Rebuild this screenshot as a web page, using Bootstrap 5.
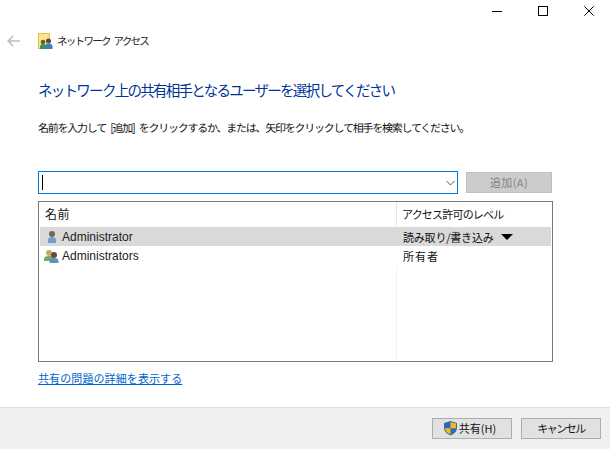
<!DOCTYPE html>
<html lang="ja">
<head>
<meta charset="utf-8">
<title>ネットワーク アクセス</title>
<link href="https://cdn.jsdelivr.net/npm/bootstrap@5.3.0/dist/css/bootstrap.min.css" rel="stylesheet">
<style>
html,body{height:100%;}
body{width:610px;height:449px;overflow:hidden;background:#fff;color:#111;font-family:"Noto Sans CJK JP","Liberation Sans",sans-serif;font-size:12px;line-height:16px;}
.win-root{height:449px;}
.title-strip{height:22px;}
.win-ctl{width:46px;height:22px;padding-left:4px;}
.nav-strip{height:38px;padding-left:7px;gap:17px;color:#333;}
.nav-title{margin-left:-14px;font-size:10.5px;letter-spacing:-1.7px;word-spacing:3px;color:#222;white-space:pre;}
.body-area{padding:0 57px 0 38px;}
.head-text{margin:20px 0 0;font-size:14.5px;line-height:20px;font-weight:400;color:#003399;letter-spacing:-1.72px;white-space:nowrap;}
.lead-text{margin:20px 0 0;font-size:11px;line-height:16px;letter-spacing:-1.25px;word-spacing:3px;text-rendering:geometricPrecision;white-space:nowrap;}
.pick-row{margin-top:35px;height:23px;gap:8px;}
.pick-box{width:420px;height:23px;border:1.5px solid #0078d7;padding:0 2px 0 3px;}
.caret-bar{width:1px;height:15px;background:#000;}
.add-off.btn:disabled{width:86px;height:21px;background:#ccc;border:1px solid #bfbfbf;color:#838383;opacity:1;font-size:11px;line-height:19px;letter-spacing:.4px;text-align:center;padding:0;border-radius:0;}
.user-table{margin-top:7px;height:161px;width:515px;border:1px solid #7a7a7a;padding:0 1px;}
.col-one{width:357px;flex:none;}
.col-two{width:154px;flex:none;}
.th-row{height:25px;}
.th-one{padding:4px 0 0 5px;border-right:1px solid #e5e5e5;font-size:12px;letter-spacing:.5px;}
.th-two{padding:4px 0 0 5px;letter-spacing:-.8px;}
.cell-txt{font-size:11px;letter-spacing:-.2px;white-space:nowrap;}
.user-row{height:19px;align-items:center;}
.user-sel{background:#d9d9d9;}
.user-row .col-one{padding-left:4px;gap:2px;font-family:"Liberation Sans",sans-serif;font-size:12px;letter-spacing:0;color:#222;}
.user-row .group-cell{padding-left:3px;gap:1px;}
.user-row .col-two{padding-left:6px;}
.owner-txt{letter-spacing:1px;}
.drop-tri{width:0;height:0;border-left:6px solid transparent;border-right:6px solid transparent;border-top:6px solid #000;margin-left:7px;}
.rest-rule{height:96px;}
.rest-one{border-right:1px solid #f2f2f2;}
.help-link{display:inline-block;margin-top:8px;font-size:11px;line-height:16px;color:#0066cc;letter-spacing:.1px;}
.foot-bar{height:42px;background:#f0f0f0;border-top:1px solid #dfdfdf;padding:10px 9px 0 0;gap:9px;margin-top:auto;}
.foot-btn{width:80px;height:21px;background:#e1e1e1;border:1px solid #adadad;border-radius:0;padding:0;font-size:11px;line-height:19px;color:#111;white-space:nowrap;}
.foot-btn svg{margin-right:1px;vertical-align:-3px;}
.share-btn{padding-right:5px;}
.cancel-txt{letter-spacing:-1.5px;}
</style>
</head>
<body>
<div class="win-root d-flex flex-column">
  <div class="title-strip d-flex justify-content-end">
    <div class="win-ctl d-flex align-items-center justify-content-center"><svg width="10" height="10" viewBox="0 0 10 10"><path d="M0 5.5h10" stroke="#000" fill="none"/></svg></div>
    <div class="win-ctl d-flex align-items-center justify-content-center"><svg width="10" height="10" viewBox="0 0 10 10"><rect x=".5" y=".5" width="9" height="9" stroke="#000" fill="none"/></svg></div>
    <div class="win-ctl d-flex align-items-center justify-content-center"><svg width="10" height="10" viewBox="0 0 10 10"><path d="M.3.3l9.400 9.400M9.700.3L.3 9.700" stroke="#000" fill="none"/></svg></div>
  </div>
  <div class="nav-strip d-flex align-items-center">
    <svg width="14" height="12" viewBox="0 0 14 12"><path d="M6 1L1.200 6 6 11M1.500 6H13" stroke="#bdbdbd" stroke-width="1.6" fill="none"/></svg>
    <svg width="16" height="17" viewBox="0 0 16 17"><rect x=".5" y=".5" width="11" height="15" fill="#fde68a" stroke="#e2bc4d"/><circle cx="5" cy="9" r="2.300" fill="#6b5a43"/><path d="M2 16v-2.500q0-2.500 3-2.500t3 2.500V16z" fill="#3f8f5a"/><circle cx="10.500" cy="8" r="2.500" fill="#5c4a3a"/><path d="M7 16v-3q0-2.500 3.500-2.500T14.500 13v3z" fill="#3d7fb8"/></svg>
    <span class="nav-title">ネットワーク アクセス</span>
  </div>
  <div class="body-area">
    <h1 class="head-text">ネットワーク上の共有相手となるユーザーを選択してください</h1>
    <p class="lead-text">名前を入力して [追加] をクリックするか、または、矢印をクリックして相手を検索してください。</p>
    <div class="pick-row d-flex align-items-center">
      <div class="pick-box d-flex align-items-center justify-content-between">
        <span class="caret-bar"></span>
        <svg width="9" height="6" viewBox="0 0 9 6"><path d="M.5 1l4 4 4-4" stroke="#555" fill="none"/></svg>
      </div>
      <button class="add-off btn" disabled>追加(A)</button>
    </div>
    <div class="user-table">
      <div class="th-row d-flex cell-txt">
        <div class="col-one th-one">名前</div>
        <div class="col-two th-two">アクセス許可のレベル</div>
      </div>
      <div class="user-row user-sel d-flex">
        <div class="col-one d-flex align-items-center">
          <svg width="16" height="16" viewBox="0 0 16 16"><circle cx="8" cy="5" r="3" fill="#7a6552"/><path d="M4 14v-3q0-3 4-3t4 3v3z" fill="#6f9fc8"/></svg>
          <span>Administrator</span>
        </div>
        <div class="col-two d-flex align-items-center cell-txt">読み取り/書き込み<span class="drop-tri"></span></div>
      </div>
      <div class="user-row d-flex">
        <div class="col-one group-cell d-flex align-items-center">
          <svg width="18" height="16" viewBox="0 0 18 16"><circle cx="6" cy="5" r="3" fill="#c9a769"/><path d="M1 13v-2q0-3 5-3t5 3v2z" fill="#7aa86a"/><circle cx="11" cy="7" r="3" fill="#5e4e40"/><path d="M6.500 15v-2q0-3 4.500-3t4.500 3v2z" fill="#5f93c2"/></svg>
          <span>Administrators</span>
        </div>
        <div class="col-two cell-txt owner-txt">所有者</div>
      </div>
      <div class="rest-rule d-flex"><div class="col-one rest-one"></div></div>
    </div>
    <a href="#" class="help-link">共有の問題の詳細を表示する</a>
  </div>
  <div class="foot-bar d-flex justify-content-end align-items-start">
    <button class="foot-btn btn share-btn"><svg width="15" height="16" viewBox="0 0 15 16"><path d="M7.500 1L14 3v5q0 5-6.500 7.500Q1 13 1 8V3z" fill="#2b6cb8"/><path d="M7.500 2V8.300H13V3.500zM7.500 8.300V14.500Q2.500 12.500 2 8.300z" fill="#f5b81f"/></svg>共有(H)</button>
    <button class="foot-btn btn cancel-txt">キャンセル</button>
  </div>
</div>
</body>
</html>
